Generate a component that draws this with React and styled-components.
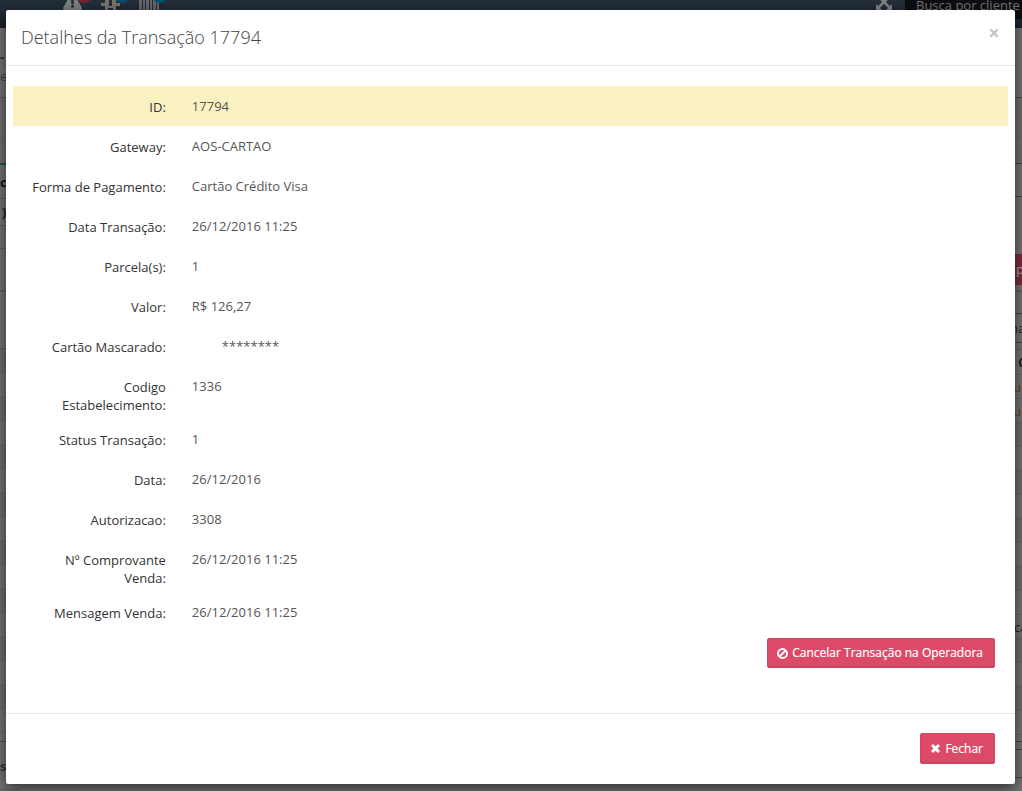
import React from "react";
import styled, { createGlobalStyle } from "styled-components";
import { FaExclamationTriangle } from "react-icons/fa";

const GlobalStyle = createGlobalStyle`
  *, *::before, *::after { box-sizing: border-box; }
  body {
    margin: 0;
    background: #737373;
    color: #333;
    font: 400 13px/18px "Open Sans", sans-serif;
  }
`;

const Screen = styled.div`
  position: relative;
  display: grid;
  min-height: 100vh;
  overflow: hidden;
`;

const Page = styled.div`
  position: absolute;
  inset: 0;
  overflow: hidden;
`;

const TopBar = styled.header`
  display: flex;
  align-items: flex-start;
  height: 28px;
  background: linear-gradient(#242f3b, #1a222c);
  color: #7e8083;
`;

const Tools = styled.div`
  display: flex;
  flex: 1;
  gap: 17px;
  padding-left: 63px;
`;

const Tool = styled.span`
  position: relative;
  width: 21px;
  height: 12px;
  svg { display: block; }
`;

const WarningIcon = styled(FaExclamationTriangle)`
  margin-top: -8px;
`;

const Badge = styled.i`
  position: absolute;
  right: -8px;
  top: -13px;
  width: 16px;
  height: 16px;
  border-radius: 50%;
  background: ${(p) => p.$color};
`;

const Expand = styled.span`
  width: 29px;
  height: 14px;
  svg { display: block; margin-top: -6px; }
`;

const Search = styled.input`
  width: 117px;
  height: 19px;
  padding: 0 0 10px 11px;
  border: 0;
  background: #0c0e11;
  font: 400 13px/18px "Open Sans", sans-serif;
  &::placeholder { color: #777; opacity: 1; }
`;

const Edges = styled.div`
  display: flex;
  justify-content: space-between;
`;

const Edge = styled.div`
  width: 20px;
  white-space: nowrap;
`;

const Strip = styled.div`
  display: flex;
  align-items: center;
  height: ${(p) => p.$h}px;
  padding-left: ${(p) => p.$pad || 0}px;
  border-bottom: ${(p) => p.$line || 1}px solid ${(p) => p.$color || "#5f5f5f"};
  background: ${(p) => p.$bg || "#737373"};
  color: ${(p) => p.$ink || "#222"};
  font-weight: ${(p) => (p.$bold ? 700 : 400)};
  line-height: 18px;
`;

const Dialog = styled.section`
  position: relative;
  align-self: start;
  margin: 10px 7px 7px 6px;
  border-radius: 2px;
  background: #fff;
  box-shadow: 0 4px 14px rgba(0, 0, 0, 0.6);
`;

const DialogHeader = styled.header`
  display: flex;
  align-items: flex-start;
  justify-content: space-between;
  height: 56px;
  padding: 15px 15px 0;
  border-bottom: 1px solid #e5e5e5;
`;

const Title = styled.h4`
  margin: 0;
  color: #444;
  font-size: 18px;
  font-weight: 300;
  line-height: 25px;
`;

const CloseIcon = styled.button`
  width: 12px;
  height: 16px;
  padding: 0;
  border: 0;
  background: none;
  color: #c4c4c4;
  font: 700 20px/14px "Open Sans", sans-serif;
`;

const Body = styled.div`
  padding: 20px 7px 45px;
`;

const Details = styled.dl`
  margin: 0;
`;

const Row = styled.div`
  display: grid;
  grid-template-columns: 1fr 5fr;
  min-height: 40px;
  background: ${(p) => (p.$active ? "#faf1c2" : "transparent")};
`;

const Label = styled.dt`
  padding: 12px 13px 5px;
  text-align: right;
`;

const Value = styled.dd`
  margin: 0;
  padding: 11px 13px 5px;
  padding-left: ${(p) => (p.$indent ? 43 : 13)}px;
  color: #555;
`;

const Actions = styled.div`
  display: flex;
  justify-content: flex-end;
  padding: 6px 13px 0;
`;

const Footer = styled.footer`
  display: flex;
  justify-content: flex-end;
  padding: 19px 20px 20px;
  border-top: 1px solid #e5e5e5;
`;

const DangerButton = styled.button`
  display: flex;
  align-items: center;
  gap: 4px;
  height: ${(p) => p.$h}px;
  padding: 0 11px 0 9px;
  border: 1px solid #cf4863;
  border-radius: 2px;
  background: #dc4a67;
  box-shadow: inset 0 -1px 0 #c9455f;
  color: #fff;
  font: 400 12px/18px "Open Sans", sans-serif;
  -webkit-text-stroke: 0.2px #fff;
  white-space: nowrap;
`;

const rows = [
  ["ID:", "17794"],
  ["Gateway:", "AOS-CARTAO"],
  ["Forma de Pagamento:", "Cartão Crédito Visa"],
  ["Data Transação:", "26/12/2016 11:25"],
  ["Parcela(s):", "1"],
  ["Valor:", "R$ 126,27"],
  ["Cartão Mascarado:", "********"],
  ["Codigo Estabelecimento:", "1336"],
  ["Status Transação:", "1"],
  ["Data:", "26/12/2016"],
  ["Autorizacao:", "3308"],
  ["Nº Comprovante Venda:", "26/12/2016 11:25"],
  ["Mensagem Venda:", "26/12/2016 11:25"],
];

const stripe = (n) =>
  Array.from({ length: n }, (_, i) => ({
    h: 24,
    color: "#666",
    bg: i % 2 ? "#737373" : "#6c6c6c",
  }));

const leftStrips = [
  { h: 20, color: "#737373" },
  { h: 18, text: "-", bold: true, color: "#737373" },
  { h: 20, text: "er", ink: "#444", color: "#737373" },
  { h: 12 },
  { h: 40, bg: "#6e6e6e", color: "#666" },
  { h: 27, bg: "#6e6e6e", line: 2, color: "#2d4b5c" },
  { h: 34, text: "ca", bold: true, ink: "#111" },
  { h: 27, text: ")", bold: true, ink: "#1c1a14", pad: 2 },
  { h: 23 },
  { h: 43, line: 2 },
  { h: 57 },
  ...stripe(16),
  { h: 9, color: "#4c4c4c" },
  { h: 48, text: "s", bold: true, ink: "#333" },
];

const rightStrips = [
  { h: 70, color: "#505050" },
  { h: 40, bg: "#6e6e6e", color: "#666" },
  { h: 26, bg: "#6e6e6e", color: "#444" },
  { h: 33, color: "#444" },
  { h: 57, color: "#737373" },
  { h: 31, text: "p", bg: "#7c2a3a", color: "#7c2a3a", ink: "#aaa", pad: 14 },
  { h: 7, line: 2, color: "#606060" },
  { h: 22, color: "#444" },
  { h: 29, text: "na", color: "#444", pad: 8 },
  { h: 7, color: "#606060" },
  { h: 25, text: "C", bold: true, pad: 16, color: "#666" },
  { h: 24, text: "ur", ink: "#5c3a20", color: "#666", pad: 11 },
  { h: 24, text: "ur", ink: "#5c3a20", color: "#666", pad: 11 },
  ...stripe(8),
  { h: 24, text: "ca", color: "#666", pad: 12 },
  ...stripe(4),
  { h: 7, color: "#444" },
  { h: 8, color: "#444" },
  { h: 28, color: "#444" },
];

function Strips({ items }) {
  return (
    <Edge>
      {items.map((s, i) => (
        <Strip key={i} $h={s.h} $line={s.line} $color={s.color} $bg={s.bg} $ink={s.ink} $bold={s.bold} $pad={s.pad}>
          {s.text}
        </Strip>
      ))}
    </Edge>
  );
}

function TimesIcon() {
  return (
    <svg width="11" height="9" viewBox="-1 0 11 9" aria-hidden="true">
      <path d="M0 2L2 0L4.5 2.3L7 0L9 2L6.6 4.5L9 7L7 9L4.5 6.7L2 9L0 7L2.4 4.5Z" fill="currentColor" />
    </svg>
  );
}

function BanIcon() {
  return (
    <svg width="11" height="11" viewBox="0 0 11 11" aria-hidden="true">
      <g fill="none" stroke="currentColor" strokeWidth="1.9">
        <circle cx="5.5" cy="5.5" r="4.5" />
        <path d="M2.5 8.5L8.5 2.5" />
      </g>
    </svg>
  );
}

function ExpandIcon() {
  return (
    <svg width="16" height="16" viewBox="0 0 16 16">
      <path d="M2 2L14 14M14 2L2 14" stroke="currentColor" strokeWidth="2.6" />
      <path d="M0 0H6L0 6ZM16 0V6L10 0ZM0 16V10L6 16ZM16 16H10L16 10Z" fill="currentColor" />
    </svg>
  );
}

export default function App() {
  return (
    <Screen>
      <GlobalStyle />
      <Page aria-hidden="true">
        <TopBar>
          <Tools>
            <Tool>
              <WarningIcon size={19} />
              <Badge $color="#7c2034" />
            </Tool>
            <Tool>
              <svg width="19" height="12" viewBox="0 0 19 12">
                <path d="M4 0H15V3H19V6H15V10H12V8H7V10H4V6H0V3H4ZM8 0V6H11V0Z" fill="#77736d" fillRule="evenodd" />
              </svg>
              <Badge $color="#064f70" />
            </Tool>
            <Tool>
              <svg width="20" height="12" viewBox="0 0 20 12">
                <path d="M0 0H3V10H0ZM4 0H6V10H4ZM7 0H10V10H7ZM11 0H13V10H11ZM14 0H17V10H14ZM18 0H20V10H18Z" fill="#65686b" />
              </svg>
              <Badge $color="#064f70" />
            </Tool>
          </Tools>
          <Expand><ExpandIcon /></Expand>
          <Search placeholder="Busca por cliente" aria-label="Busca por cliente" tabIndex={-1} />
        </TopBar>
        <Edges>
          <Strips items={leftStrips} />
          <Strips items={rightStrips} />
        </Edges>
      </Page>
      <Dialog role="dialog" aria-labelledby="dialog-title">
        <DialogHeader>
          <Title id="dialog-title">Detalhes da Transação 17794</Title>
          <CloseIcon type="button" aria-label="Fechar">×</CloseIcon>
        </DialogHeader>
        <Body>
          <Details>
            {rows.map(([label, value]) => (
              <Row key={label} $active={label === "ID:"}>
                <Label>{label}</Label>
                <Value $indent={value === "********"}>{value}</Value>
              </Row>
            ))}
          </Details>
          <Actions>
            <DangerButton type="button" $h={30}><BanIcon />Cancelar Transação na Operadora</DangerButton>
          </Actions>
        </Body>
        <Footer>
          <DangerButton type="button" $h={31}><TimesIcon />Fechar</DangerButton>
        </Footer>
      </Dialog>
    </Screen>
  );
}
